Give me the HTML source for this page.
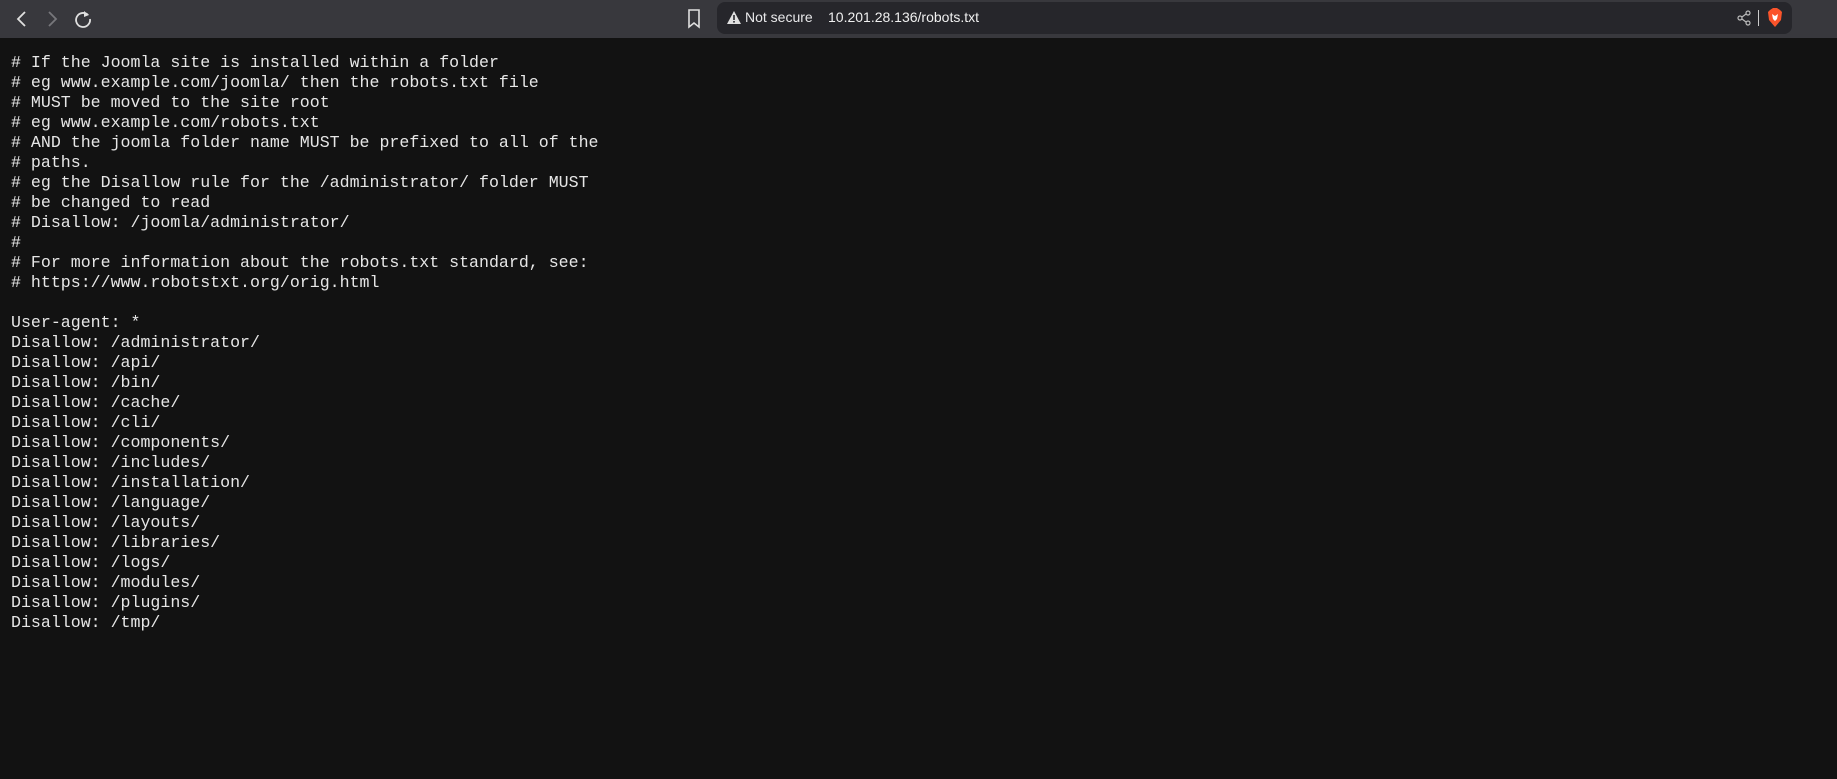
<!DOCTYPE html>
<html><head><meta charset="utf-8"><style>
html,body{margin:0;padding:0;width:1837px;height:779px;overflow:hidden;background:#121212;}
.bar{position:absolute;left:0;top:0;width:1837px;height:38px;background:#38383d;}
.addr{position:absolute;left:717px;top:2px;width:1075px;height:32px;background:#26262b;border-radius:8px;}
.t{position:absolute;font-family:"Liberation Sans",sans-serif;font-size:14px;color:#e8e8ea;top:9px;}
pre{position:absolute;left:11px;top:53px;margin:0;font-family:"Liberation Mono",monospace;font-size:16.6px;line-height:20px;color:#e6e6e6;}
svg{position:absolute;}
</style></head><body>
<div class="bar"></div>
<svg style="left:12px;top:9px" width="20" height="20" viewBox="0 0 20 20"><path d="M13 3 L6 10 L13 17" stroke="#e0e0e0" stroke-width="1.8" fill="none"/></svg>
<svg style="left:42px;top:9px" width="20" height="20" viewBox="0 0 20 20"><path d="M7 3 L14 10 L7 17" stroke="#77777c" stroke-width="1.8" fill="none"/></svg>
<svg style="left:72px;top:8px" width="22" height="22" viewBox="0 0 22 22"><path d="M16 7 A7 7 0 1 0 18 11" stroke="#e0e0e0" stroke-width="1.8" fill="none"/><path d="M12 3 L17 7 L12 9" fill="#e0e0e0"/></svg>
<svg style="left:686px;top:8px" width="16" height="22" viewBox="0 0 16 22"><path d="M3 2 H13 V19 L8 15 L3 19 Z" stroke="#e0e0e0" stroke-width="1.6" fill="none"/></svg>
<div class="addr"></div>
<svg style="left:727px;top:11px" width="14" height="13" viewBox="0 0 14 13"><path d="M7 0 L14 13 H0 Z" fill="#e0e0e0"/><rect x="6.2" y="4" width="1.6" height="5" fill="#26262b"/><rect x="6.2" y="10" width="1.6" height="1.6" fill="#26262b"/></svg>
<div class="t" style="left:745px">Not secure</div>
<div class="t" style="left:828px;color:#f0f0f0">10.201.28.136/robots.txt</div>
<svg style="left:1737px;top:10px" width="14" height="16" viewBox="0 0 14 16"><circle cx="11" cy="3" r="2" stroke="#bbb" fill="none" stroke-width="1.2"/><circle cx="3" cy="8" r="2" stroke="#bbb" fill="none" stroke-width="1.2"/><circle cx="11" cy="13" r="2" stroke="#bbb" fill="none" stroke-width="1.2"/><path d="M5 7 L9 4 M5 9 L9 12" stroke="#bbb" stroke-width="1.2"/></svg>
<div style="position:absolute;left:1758px;top:10px;width:1px;height:16px;background:#ccc"></div>
<svg style="left:1768px;top:8px" width="14" height="19" viewBox="0 0 14 19"><path d="M2 2 L5 0 H9 L12 2 L14 4 L13 12 L7 19 L1 12 L0 4 Z" fill="#fb542b"/><path d="M4 6 L7 8 L10 6 L9 11 L7 13 L5 11 Z" fill="#fff"/></svg>
<pre># If the Joomla site is installed within a folder
# eg www.example.com/joomla/ then the robots.txt file
# MUST be moved to the site root
# eg www.example.com/robots.txt
# AND the joomla folder name MUST be prefixed to all of the
# paths.
# eg the Disallow rule for the /administrator/ folder MUST
# be changed to read
# Disallow: /joomla/administrator/
#
# For more information about the robots.txt standard, see:
# https://www.robotstxt.org/orig.html

User-agent: *
Disallow: /administrator/
Disallow: /api/
Disallow: /bin/
Disallow: /cache/
Disallow: /cli/
Disallow: /components/
Disallow: /includes/
Disallow: /installation/
Disallow: /language/
Disallow: /layouts/
Disallow: /libraries/
Disallow: /logs/
Disallow: /modules/
Disallow: /plugins/
Disallow: /tmp/</pre>
</body></html>
